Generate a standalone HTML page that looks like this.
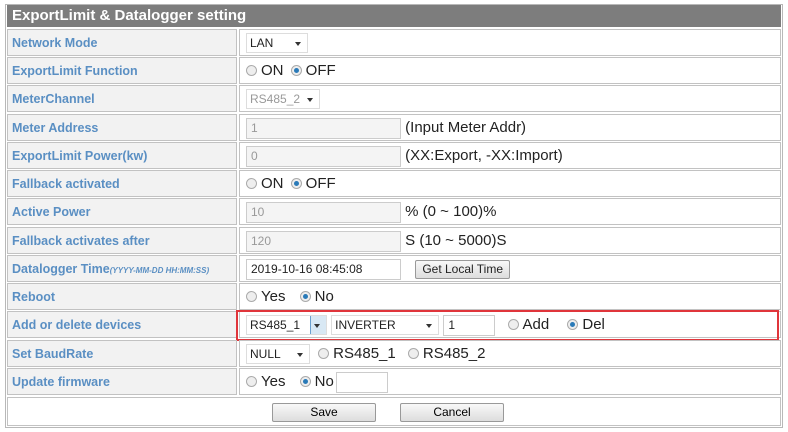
<!DOCTYPE html>
<html><head><style>
*{box-sizing:border-box;margin:0;padding:0}
body{width:788px;height:432px;background:#fff;font-family:"Liberation Sans",Arial,sans-serif;position:relative;overflow:hidden}
.outer{position:absolute;left:5px;top:4px;width:778px;height:424px;border:1px solid #b8b8b8}
.hdr{position:absolute;left:7px;top:5px;width:774px;height:22px;background:#7d7d7d;color:#fff;font-weight:bold;font-size:15px;line-height:22px;padding-left:5px}
.l{position:absolute;left:7px;width:230px;height:27px;background:#f2f2f2;border:1px solid #c2c2c2;color:#5a8fc3;font-weight:bold;font-size:12.5px;line-height:26px;padding-left:4px;white-space:nowrap}
.v{position:absolute;left:239px;width:542px;height:27px;background:#fff;border:1px solid #c2c2c2;font-size:15px;line-height:26px;padding-left:6px;white-space:nowrap;color:#222}
.sel{display:inline-block;border:1px solid #ddd;height:20px;font-size:12px;line-height:18px;padding-left:3px;vertical-align:middle;position:relative;background:#fff}
.sel:after{content:"";position:absolute;right:6px;top:8px;border:3.5px solid transparent;border-top:4px solid #333}
.inp{display:inline-block;border:1px solid #ccc;height:21px;font-size:12px;line-height:19px;padding-left:4px;vertical-align:middle;background:#f4f4f4;color:#999}
.r{display:inline-block;width:11px;height:11px;border:1px solid #aaa;border-radius:50%;background:#eee;vertical-align:middle;margin:0 4px 2px 0;position:relative}
.r.on:after{content:"";position:absolute;left:2px;top:2px;width:5px;height:5px;border-radius:50%;background:#2a7ab8}
.btn{display:inline-block;border:1px solid #999;border-radius:2px;background:linear-gradient(#f8f8f8,#ddd);font-size:12px;text-align:center;height:19px;line-height:17px;vertical-align:middle}
</style></head><body>
<div class="outer"></div>
<div class="hdr">ExportLimit &amp; Datalogger setting</div>

<div class="l" style="top:29px">Network Mode</div>
<div class="v" style="top:29px"><span class="sel" style="width:62px">LAN</span></div>

<div class="l" style="top:57px">ExportLimit Function</div>
<div class="v" style="top:57px"><span class="r"></span>ON <span class="r on" style="margin-left:3px"></span>OFF</div>

<div class="l" style="top:85px">MeterChannel</div>
<div class="v" style="top:85px"><span class="sel" style="width:74px;color:#999;border-color:#ddd">RS485_2</span></div>

<div class="l" style="top:114px">Meter Address</div>
<div class="v" style="top:114px"><span class="inp" style="width:155px">1</span> (Input Meter Addr)</div>

<div class="l" style="top:142px">ExportLimit Power(kw)</div>
<div class="v" style="top:142px"><span class="inp" style="width:155px">0</span> (XX:Export, -XX:Import)</div>

<div class="l" style="top:170px">Fallback activated</div>
<div class="v" style="top:170px"><span class="r"></span>ON <span class="r on" style="margin-left:3px"></span>OFF</div>

<div class="l" style="top:198px">Active Power</div>
<div class="v" style="top:198px"><span class="inp" style="width:155px">10</span> % (0 ~ 100)%</div>

<div class="l" style="top:227px">Fallback activates after</div>
<div class="v" style="top:227px"><span class="inp" style="width:155px">120</span> S (10 ~ 5000)S</div>

<div class="l" style="top:255px">Datalogger Time<i style="font-size:8px">(YYYY-MM-DD HH:MM:SS)</i></div>
<div class="v" style="top:255px"><span class="inp" style="width:155px;background:#fff;color:#222">2019-10-16 08:45:08</span> <span class="btn" style="width:95px;margin-left:10px">Get Local Time</span></div>

<div class="l" style="top:283px">Reboot</div>
<div class="v" style="top:283px"><span class="r"></span>Yes <span class="r on" style="margin-left:10px"></span>No</div>

<div class="l" style="top:311px">Add or delete devices</div>
<div class="v" style="top:311px"><span class="sel" style="width:81px">RS485_1<b style="position:absolute;right:0;top:0;width:16px;height:18px;background:#d8e8f4;border-left:1px solid #6aa0cf"></b></span> <span class="sel" style="width:108px">INVERTER</span> <span class="inp" style="width:52px;background:#fff;color:#222">1</span> <span class="r" style="margin-left:8px"></span>Add <span class="r on" style="margin-left:14px"></span>Del</div>
<div style="position:absolute;left:236px;top:310px;width:543px;height:31px;border:2px solid #e0353b"></div>

<div class="l" style="top:340px">Set BaudRate</div>
<div class="v" style="top:340px"><span class="sel" style="width:64px">NULL</span> <span class="r" style="margin-left:4px"></span>RS485_1 <span class="r" style="margin-left:8px"></span>RS485_2</div>

<div class="l" style="top:368px">Update firmware</div>
<div class="v" style="top:368px"><span class="r"></span>Yes <span class="r on" style="margin-left:10px"></span>No<span class="inp" style="width:52px;background:#fff;margin-left:2px"></span></div>

<div style="position:absolute;left:7px;top:397px;width:774px;height:29px;border:1px solid #c2c2c2;background:#fff"></div>
<span class="btn" style="position:absolute;left:272px;top:403px;width:104px">Save</span>
<span class="btn" style="position:absolute;left:400px;top:403px;width:104px">Cancel</span>
</body></html>
